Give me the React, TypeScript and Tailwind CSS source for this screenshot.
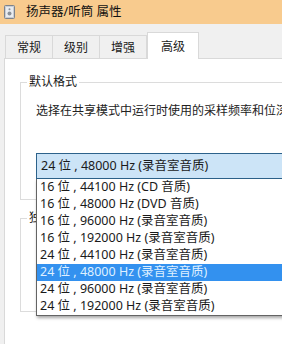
import React from 'react';

/** 下拉列表选项 */
const FORMATS: string[] = [
  '16 位，44100 Hz (CD 音质)',
  '16 位，48000 Hz (DVD 音质)',
  '16 位，96000 Hz (录音室音质)',
  '16 位，192000 Hz (录音室音质)',
  '24 位，44100 Hz (录音室音质)',
  '24 位，48000 Hz (录音室音质)',
  '24 位，96000 Hz (录音室音质)',
  '24 位，192000 Hz (录音室音质)',
];

const SELECTED = 5;

const TABS = ['常规', '级别', '增强', '高级'];

function fmt(s: string) {
  // 全角逗号显示成 " , "
  return s.replace('，', ' , ');
}

function SpeakerIcon() {
  return (
    <svg width="11" height="14" viewBox="0 0 11 14">
      <rect x="0.5" y="0.5" width="10" height="13" rx="1" fill="#c9cdd3" stroke="#7d838c" />
      <rect x="2" y="2" width="7" height="10" fill="#e9ecf0" />
      <circle cx="5.5" cy="8.5" r="2" fill="#8a9099" />
      <circle cx="5.5" cy="4.2" r="1" fill="#8a9099" />
    </svg>
  );
}

export default function App() {
  return (
    <div
      className="w-[282px] h-[344px] overflow-hidden bg-[#f0f0f0] flex flex-col text-[12px] text-[#1a1a1a]"
      style={{ fontFamily: '"Noto Sans", "Noto Sans CJK SC", sans-serif' }}
    >
      {/* Title bar */}
      <div className="h-[24px] shrink-0 bg-[#f8cb8e] flex items-center gap-[11px] pl-[4px]">
        <SpeakerIcon />
        <span className="text-[12.5px] leading-none text-[#111]">扬声器/听筒 属性</span>
      </div>

      {/* Tabs */}
      <div className="h-[34px] shrink-0 flex items-end pl-[5px] relative z-10">
        {TABS.map((t, i) =>
          i === 3 ? (
            <div
              key={t}
              className="w-[52px] h-[27px] -mb-px bg-white border border-b-0 border-[#d9d9d9] flex items-start pt-[5px] justify-center"
            >
              {t}
            </div>
          ) : (
            <div
              key={t}
              className={`w-[48px] h-[23px] bg-[#f0f0f0] border border-b-0 border-[#d9d9d9] flex items-center justify-center pt-[2px] ${i > 0 ? '-ml-px' : ''}`}
            >
              {t}
            </div>
          )
        )}
      </div>

      {/* Panel */}
      <div className="flex-1 ml-[4px] bg-white border-l border-t border-[#d9d9d9] pl-[15px] pt-[16px]">
        <fieldset className="w-[300px] h-[125px] border border-[#dcdcdc] pl-[15px] pr-0">
          <legend className="-ml-[9px] px-[2px] leading-[14px]">默认格式</legend>
          <p className="mt-[14px] whitespace-nowrap leading-[16px] text-[#222]">
            选择在共享模式中运行时使用的采样频率和位深度。
          </p>
          <div className="relative mt-[34px] z-20">
            <div className="h-[26px] w-[290px] bg-[#cce4f7] border border-[#2c628b] flex items-center pl-[4px] text-[12.5px] whitespace-nowrap">
              {fmt(FORMATS[SELECTED])}
            </div>
            <ul className="absolute top-full left-0 w-[290px] bg-white border-l border-b border-[#646464] shadow-[1px_2px_3px_rgba(0,0,0,0.35)]">
              {FORMATS.map((f, i) => (
                <li
                  key={f}
                  className={`h-[17px] pl-[3px] flex items-center whitespace-nowrap text-[12.5px] ${
                    i === SELECTED ? 'bg-[#3391ef] text-[#dff0ff]' : ''
                  }`}
                >
                  {fmt(f)}
                </li>
              ))}
            </ul>
          </div>
        </fieldset>

        <fieldset className="mt-[11px] w-[300px] h-[101px] border border-[#dcdcdc] pl-[15px]">
          <legend className="-ml-[9px] px-[2px] leading-[14px]">独占模式</legend>
        </fieldset>
      </div>
    </div>
  );
}
